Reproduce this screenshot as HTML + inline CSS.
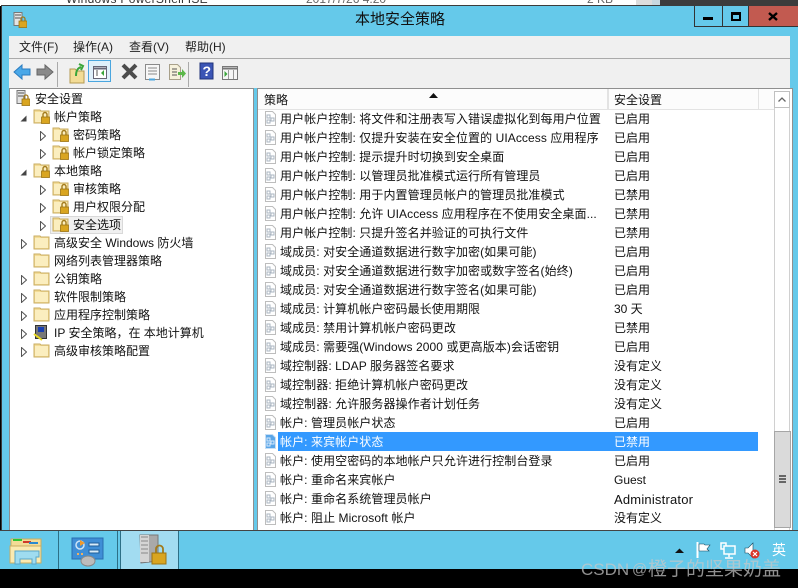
<!DOCTYPE html>
<html><head><meta charset="utf-8"><style>
html,body{margin:0;padding:0;width:798px;height:588px;overflow:hidden;background:#000}
body{position:relative;font:12px/16px "Liberation Sans","Noto Sans CJK SC",sans-serif;color:#111}
div,span,svg{position:absolute}
span{white-space:nowrap}
.r{height:19px;left:0;width:500px}
.r svg{left:6px;top:2px}
.r span{line-height:19px;top:1px;left:22px;letter-spacing:.08px}
.r span+span{left:356px;letter-spacing:0}
.t{height:18px;left:0;width:240px}
.t span{line-height:18px;top:0}
.t svg{top:0}
.m{top:39px;font-size:12px;line-height:16px;color:#222}
</style></head><body>
<svg width="0" height="0" style="left:0;top:0"><defs>
<symbol id="doc" viewBox="0 0 13 15"><path d="M1.5.5h7l3 3v11h-10z" fill="#fff" stroke="#bdbdbd"/><path d="M3 4h3v3H3zM7 7h3v3H7zM3 9h3v3H3z" fill="none" stroke="#aab4c0"/></symbol>
<symbol id="docs" viewBox="0 0 13 15"><path d="M1.5.5h7l3 3v11h-10z" fill="#5aa6e8" stroke="#c6def5"/><path d="M3 4h3v3H3zM7 7h3v3H7zM3 9h3v3H3z" fill="none" stroke="#d7e8fa"/></symbol>
<symbol id="fold" viewBox="0 0 17 16"><path d="M1 3V2h6l1 1h8v12H1z" fill="#f3dc96" stroke="#c9ad62"/><path d="M2 4h13v10H2z" fill="#fbeebf"/></symbol>
<symbol id="flock" viewBox="0 0 17 16"><path d="M1 3V2h6l1 1h8v12H1z" fill="#f3dc96" stroke="#c9ad62"/><path d="M2 4h13v10H2z" fill="#fbeebf"/><path d="M10 9V6.5a2 2 0 0 1 4 0V9" fill="none" stroke="#a27a1c" stroke-width="1.4"/><rect x="8.5" y="9" width="8" height="6.5" fill="#d9a520" stroke="#9c7412" stroke-width=".8"/></symbol>
<symbol id="slock" viewBox="0 0 14 16"><path d="M1 .5h8v13H1z" fill="#e4e4e4" stroke="#777"/><path d="M2 3h6M2 6h6" stroke="#555"/><path d="M8 9V7a2 2 0 0 1 4 0v2" fill="none" stroke="#a27a1c" stroke-width="1.3"/><rect x="6" y="9" width="8" height="6.5" fill="#d9a520" stroke="#9c7412" stroke-width=".8"/></symbol>
<symbol id="ao" viewBox="0 0 6 10"><path d="M.5.5l5 4.5-5 4.5z" fill="#fff" stroke="#555"/></symbol>
<symbol id="ad" viewBox="0 0 7 7"><path d="M6.5.5v6h-6z" fill="#444"/></symbol>
</defs></svg>

<!-- background fragment -->
<div style="left:0;top:0;width:798px;height:6px;background:#fff;overflow:hidden">
<span style="left:66px;top:-9px;font-size:12px;letter-spacing:.3px;color:#333">Windows PowerShell ISE</span>
<span style="left:306px;top:-9px;color:#666">2017/7/26 4:20</span>
<span style="left:587px;top:-9px;color:#666">2 KB</span>
<div style="left:636px;top:0;width:16px;height:6px;background:#ddd"></div>
<div style="left:652px;top:0;width:8px;height:6px;background:#c8d8e0"></div>
<div style="left:660px;top:0;width:138px;height:6px;background:#3c3c3c"></div>
</div>

<!-- window -->
<div style="left:1px;top:5px;width:797px;height:525px;background:#65c9ea;border-top:1px solid #3c3c3c;border-left:1px solid #3c3c3c;box-sizing:border-box"></div>
<svg width="14" height="16" style="left:13px;top:12px"><use href="#slock"/></svg>
<span style="left:0;width:800px;text-align:center;top:12px;font-size:15px;color:#111">本地安全策略</span>
<!-- caption buttons -->
<div style="left:694px;top:6px;width:27px;height:20px;border:1px solid #333;border-top:0;box-sizing:content-box"></div>
<div style="left:722px;top:6px;width:26px;height:20px;border-right:1px solid #333;border-bottom:1px solid #333"></div>
<div style="left:749px;top:6px;width:49px;height:20px;background:#c25a50;border-bottom:1px solid #333"></div>
<div style="left:703px;top:17px;width:10px;height:3px;background:#000"></div>
<div style="left:731px;top:12px;width:6px;height:4px;border:2px solid #000;border-top-width:3px"></div>
<svg width="10" height="9" style="left:768px;top:12px"><path d="M1 1l8 7M9 1L1 8" stroke="#000" stroke-width="2.4"/></svg>

<!-- menu + toolbar -->
<div style="left:9px;top:36px;width:781px;height:22px;background:#f0f0f0"></div>
<div style="left:9px;top:58px;width:781px;height:1px;background:#aaa"></div>
<div style="left:9px;top:59px;width:781px;height:29px;background:#f0f0f0"></div>
<span class="m" style="left:19px">文件(F)</span>
<span class="m" style="left:73px">操作(A)</span>
<span class="m" style="left:129px">查看(V)</span>
<span class="m" style="left:185px">帮助(H)</span>

<svg width="240" height="29" style="left:9px;top:59px">
<path d="M5 13l8-7v4h8v6h-8v4z" fill="#4aa8e8" stroke="#2b7dc0"/>
<path d="M44 13l-8-7v4h-8v6h8v4z" fill="#8a8a8a" stroke="#666"/>
<path d="M48.500 3v25" stroke="#aaa"/>
<path d="M61 10h5l2 2h7v12H61z" fill="#f3dc96" stroke="#b39a52"/>
<path d="M67 17c0-6 2-8 5-9M70 5l4 2-2 4" fill="none" stroke="#3aa53a" stroke-width="2"/>
<rect x="79.500" y="1.500" width="22" height="21" fill="#dff0fb" stroke="#4aa6df"/>
<rect x="84.500" y="7.500" width="13" height="12" fill="#fff" stroke="#667"/>
<path d="M85 9.500h12" stroke="#667" stroke-width="2"/>
<path d="M87 12h2M87 14h2M87 16h2" stroke="#555"/>
<path d="M95 11v6l-3-3z" fill="#3aa53a"/>
<path d="M114 6l13 13M127 6L114 19" stroke="#4c4c4c" stroke-width="4"/>
<rect x="136.500" y="5.500" width="14" height="15" fill="#f7f7f7" stroke="#8a8a8a"/>
<path d="M139 9h9M139 12h9M139 15h9" stroke="#8a8a8a"/>
<path d="M140 20.500h6" stroke="#4aa6df" stroke-width="2"/>
<path d="M160.500 5.500h8l3 3v12h-11z" fill="#f6f1dc" stroke="#a8a08a"/>
<path d="M163 10h5M163 13h5M163 16h5" stroke="#555"/>
<path d="M169 13h4v-3l4 4.500-4 4.500v-3h-4z" fill="#5cb84a"/>
<path d="M179.500 3v25" stroke="#aaa"/>
<rect x="191" y="4" width="13" height="16" fill="#3b55b5" stroke="#22337a"/>
<text x="193.500" y="17" font-family="Liberation Sans" font-size="14" font-weight="bold" fill="#fff">?</text>
<rect x="213.500" y="7.500" width="15" height="13" fill="#f6f6f6" stroke="#777"/>
<path d="M214 9.500h14" stroke="#777" stroke-width="2"/>
<path d="M219.500 11v9M224.500 11v9" stroke="#999"/>
<path d="M215.500 12v6l3-3z" fill="#3aa53a"/>
</svg>

<!-- left pane -->
<div style="left:9px;top:88px;width:245px;height:443px;background:#fff;border:1px solid #8f8f8f;border-bottom:0;box-sizing:border-box;overflow:hidden">
<div class="t" style="top:1px"><svg width="14" height="16" style="left:6px"><use href="#slock"/></svg><span style="left:25px">安全设置</span></div>
<div class="t" style="top:19px"><svg width="7" height="7" style="left:10px;top:7px"><use href="#ad"/></svg><svg width="17" height="16" style="left:23px"><use href="#flock"/></svg><span style="left:44px">帐户策略</span></div>
<div class="t" style="top:37px"><svg width="6" height="10" style="left:30px;top:5px"><use href="#ao"/></svg><svg width="17" height="16" style="left:42px"><use href="#flock"/></svg><span style="left:63px">密码策略</span></div>
<div class="t" style="top:55px"><svg width="6" height="10" style="left:30px;top:5px"><use href="#ao"/></svg><svg width="17" height="16" style="left:42px"><use href="#flock"/></svg><span style="left:63px">帐户锁定策略</span></div>
<div class="t" style="top:73px"><svg width="7" height="7" style="left:10px;top:7px"><use href="#ad"/></svg><svg width="17" height="16" style="left:23px"><use href="#flock"/></svg><span style="left:44px">本地策略</span></div>
<div class="t" style="top:91px"><svg width="6" height="10" style="left:30px;top:5px"><use href="#ao"/></svg><svg width="17" height="16" style="left:42px"><use href="#flock"/></svg><span style="left:63px">审核策略</span></div>
<div class="t" style="top:109px"><svg width="6" height="10" style="left:30px;top:5px"><use href="#ao"/></svg><svg width="17" height="16" style="left:42px"><use href="#flock"/></svg><span style="left:63px">用户权限分配</span></div>
<div style="left:40px;top:127px;width:73px;height:18px;background:#f0f0f0;border:1px solid #d9d9d9;box-sizing:border-box"></div>
<div class="t" style="top:127px"><svg width="6" height="10" style="left:30px;top:5px"><use href="#ao"/></svg><svg width="17" height="16" style="left:42px"><use href="#flock"/></svg><span style="left:63px">安全选项</span></div>
<div class="t" style="top:145px"><svg width="6" height="10" style="left:11px;top:5px"><use href="#ao"/></svg><svg width="17" height="16" style="left:23px"><use href="#fold"/></svg><span style="left:44px">高级安全 Windows 防火墙</span></div>
<div class="t" style="top:163px"><svg width="17" height="16" style="left:23px"><use href="#fold"/></svg><span style="left:44px">网络列表管理器策略</span></div>
<div class="t" style="top:181px"><svg width="6" height="10" style="left:11px;top:5px"><use href="#ao"/></svg><svg width="17" height="16" style="left:23px"><use href="#fold"/></svg><span style="left:44px">公钥策略</span></div>
<div class="t" style="top:199px"><svg width="6" height="10" style="left:11px;top:5px"><use href="#ao"/></svg><svg width="17" height="16" style="left:23px"><use href="#fold"/></svg><span style="left:44px">软件限制策略</span></div>
<div class="t" style="top:217px"><svg width="6" height="10" style="left:11px;top:5px"><use href="#ao"/></svg><svg width="17" height="16" style="left:23px"><use href="#fold"/></svg><span style="left:44px">应用程序控制策略</span></div>
<div class="t" style="top:235px"><svg width="6" height="10" style="left:11px;top:5px"><use href="#ao"/></svg><svg width="16" height="17" style="left:23px"><rect x="2.500" y="1.500" width="11" height="13" fill="#777" stroke="#333"/><rect x="5" y="3" width="6" height="5" fill="#1a3fb0"/><path d="M1 10l8 6" stroke="#e8d820" stroke-width="2"/></svg><span style="left:44px">IP 安全策略，在 本地计算机</span></div>
<div class="t" style="top:253px"><svg width="6" height="10" style="left:11px;top:5px"><use href="#ao"/></svg><svg width="17" height="16" style="left:23px"><use href="#fold"/></svg><span style="left:44px">高级审核策略配置</span></div>
</div>

<!-- right pane -->
<div style="left:257px;top:88px;width:536px;height:443px;background:#fff;border:1px solid #8f8f8f;border-bottom:0;box-sizing:border-box;overflow:hidden" >
<div style="left:0;top:0;width:517px;height:20px;background:#fcfcfc;border-bottom:1px solid #e3e3e3"></div>
<div style="left:349px;top:0;width:2px;height:20px;background:#e3e3e3"></div>
<div style="left:500px;top:0;width:1px;height:20px;background:#e3e3e3"></div>
<span style="left:6px;top:3px">策略</span>
<span style="left:356px;top:3px">安全设置</span>
<svg width="9" height="5" style="left:171px;top:4px"><path d="M0 5l4.500-5L9 5z" fill="#111"/></svg>
<div style="left:0;top:20px;width:516px">
<div style="left:20px;top:323px;width:480px;height:19px;background:#3399ff"></div>
</div>
<div style="left:0;top:20px;width:516px">
<div class="r" style="top:0"><svg width="13" height="15"><use href="#doc"/></svg><span>用户帐户控制: 将文件和注册表写入错误虚拟化到每用户位置</span><span>已启用</span></div>
<div class="r" style="top:19px"><svg width="13" height="15"><use href="#doc"/></svg><span>用户帐户控制: 仅提升安装在安全位置的 UIAccess 应用程序</span><span>已启用</span></div>
<div class="r" style="top:38px"><svg width="13" height="15"><use href="#doc"/></svg><span>用户帐户控制: 提示提升时切换到安全桌面</span><span>已启用</span></div>
<div class="r" style="top:57px"><svg width="13" height="15"><use href="#doc"/></svg><span>用户帐户控制: 以管理员批准模式运行所有管理员</span><span>已启用</span></div>
<div class="r" style="top:76px"><svg width="13" height="15"><use href="#doc"/></svg><span>用户帐户控制: 用于内置管理员帐户的管理员批准模式</span><span>已禁用</span></div>
<div class="r" style="top:95px"><svg width="13" height="15"><use href="#doc"/></svg><span>用户帐户控制: 允许 UIAccess 应用程序在不使用安全桌面...</span><span>已禁用</span></div>
<div class="r" style="top:114px"><svg width="13" height="15"><use href="#doc"/></svg><span>用户帐户控制: 只提升签名并验证的可执行文件</span><span>已禁用</span></div>
<div class="r" style="top:133px"><svg width="13" height="15"><use href="#doc"/></svg><span>域成员: 对安全通道数据进行数字加密(如果可能)</span><span>已启用</span></div>
<div class="r" style="top:152px"><svg width="13" height="15"><use href="#doc"/></svg><span>域成员: 对安全通道数据进行数字加密或数字签名(始终)</span><span>已启用</span></div>
<div class="r" style="top:171px"><svg width="13" height="15"><use href="#doc"/></svg><span>域成员: 对安全通道数据进行数字签名(如果可能)</span><span>已启用</span></div>
<div class="r" style="top:190px"><svg width="13" height="15"><use href="#doc"/></svg><span>域成员: 计算机帐户密码最长使用期限</span><span>30 天</span></div>
<div class="r" style="top:209px"><svg width="13" height="15"><use href="#doc"/></svg><span>域成员: 禁用计算机帐户密码更改</span><span>已禁用</span></div>
<div class="r" style="top:228px"><svg width="13" height="15"><use href="#doc"/></svg><span>域成员: 需要强(Windows 2000 或更高版本)会话密钥</span><span>已启用</span></div>
<div class="r" style="top:247px"><svg width="13" height="15"><use href="#doc"/></svg><span>域控制器: LDAP 服务器签名要求</span><span>没有定义</span></div>
<div class="r" style="top:266px"><svg width="13" height="15"><use href="#doc"/></svg><span>域控制器: 拒绝计算机帐户密码更改</span><span>没有定义</span></div>
<div class="r" style="top:285px"><svg width="13" height="15"><use href="#doc"/></svg><span>域控制器: 允许服务器操作者计划任务</span><span>没有定义</span></div>
<div class="r" style="top:304px"><svg width="13" height="15"><use href="#doc"/></svg><span>帐户: 管理员帐户状态</span><span>已启用</span></div>
<div class="r" style="top:323px;color:#fff"><svg width="13" height="15"><use href="#docs"/></svg><span>帐户: 来宾帐户状态</span><span>已禁用</span></div>
<div class="r" style="top:342px"><svg width="13" height="15"><use href="#doc"/></svg><span>帐户: 使用空密码的本地帐户只允许进行控制台登录</span><span>已启用</span></div>
<div class="r" style="top:361px"><svg width="13" height="15"><use href="#doc"/></svg><span>帐户: 重命名来宾帐户</span><span>Guest</span></div>
<div class="r" style="top:380px"><svg width="13" height="15"><use href="#doc"/></svg><span>帐户: 重命名系统管理员帐户</span><span style="font-size:13px;letter-spacing:.2px">Administrator</span></div>
<div class="r" style="top:399px"><svg width="13" height="15"><use href="#doc"/></svg><span>帐户: 阻止 Microsoft 帐户</span><span>没有定义</span></div>
</div>
<!-- scrollbar -->
<div style="left:516px;top:2px;width:16px;height:441px;background:#fff;border:1px solid #d0d0d0;box-sizing:border-box"></div>
<div style="left:516px;top:2px;width:16px;height:17px;background:#fff;border:1px solid #c0c0c0;box-sizing:border-box"></div>
<svg width="8" height="5" style="left:520px;top:8px"><path d="M.5 4.500L4 1l3.500 3.500" fill="none" stroke="#666" stroke-width="1.300"/></svg>
<div style="left:516px;top:342px;width:17px;height:97px;background:#dadada;border:1px solid #a6a6a6;box-sizing:border-box"></div>
<div style="left:521px;top:386px;width:7px;height:2px;background:#666"></div>
<div style="left:521px;top:389px;width:7px;height:2px;background:#666"></div>
<div style="left:521px;top:392px;width:7px;height:2px;background:#666"></div>
</div>

<!-- taskbar -->
<div style="left:0;top:530px;width:798px;height:39px;background:#65c9ea;border-top:1px solid #444;box-sizing:border-box"></div>
<div style="left:58px;top:531px;width:1px;height:38px;background:#2d6f86"></div>
<div style="left:117px;top:531px;width:1px;height:38px;background:#2d6f86"></div>
<div style="left:120px;top:531px;width:59px;height:38px;background:#a2dcf1;border-left:1px solid #2d6f86;border-right:1px solid #2d6f86;box-sizing:border-box"></div>
<svg width="34" height="30" style="left:9px;top:537px"><path d="M2 9V2h30v7z" fill="#f3dc96" stroke="#c9ad62"/><path d="M4 2h9v2H4z" fill="#2fc62f"/><path d="M14 4h8v2h-8z" fill="#d03a2a"/><path d="M20 5h9v2h-9z" fill="#2a8ad0"/><path d="M1 9h31v17H1z" fill="#fbeab0" stroke="#c9ad62"/><path d="M6 14h24v6h-3v7h-4v-5H11v5H6z" fill="#9fdcf0" stroke="#5aa6c8"/></svg>
<svg width="34" height="30" style="left:71px;top:537px"><rect x="1" y="1" width="31" height="21" fill="#3f8ed6" stroke="#296eb0"/><circle cx="9" cy="8" r="4" fill="none" stroke="#cde4f6" stroke-width="1.500"/><path d="M9 3l5 3-5 3z" fill="#f09a2c"/><path d="M18 6h10v3H18zM18 13h10v3H18z" fill="#d8ecfa" stroke="#1f5e9a"/><path d="M6 17h2M10 17h2" stroke="#f0b060" stroke-width="2"/><ellipse cx="17" cy="24" rx="7" ry="5" fill="#bcbcbc" stroke="#888"/></svg>
<svg width="30" height="34" style="left:138px;top:533px"><path d="M2 2h18v26l-17 2z" fill="#a9a9a9" stroke="#777"/><path d="M2 2h9v27H2z" fill="#d4d4d4"/><path d="M3 4h7M3 8h7M3 12h7M3 16h7M3 20h7" stroke="#888"/><path d="M18 20v-4a3.500 3.500 0 0 1 7 0v4" fill="none" stroke="#a27a1c" stroke-width="1.800"/><rect x="14" y="20" width="14" height="11" fill="#d9a520" stroke="#9c7412"/></svg>
<svg width="9" height="5" style="left:675px;top:548px"><path d="M0 5l4.500-4.500L9 5z" fill="#111"/></svg>
<svg width="16" height="17" style="left:696px;top:542px"><path d="M1.500 0v16" stroke="#fff" stroke-width="2"/><path d="M3 2h5l1 1h5l-3 4 2 2H3z" fill="#fff" stroke="#17475c" stroke-width=".6"/></svg>
<svg width="16" height="17" style="left:720px;top:542px"><rect x="1" y="1" width="5" height="6" fill="none" stroke="#fff" stroke-width="1.500"/><rect x="4" y="4" width="11" height="8" fill="#65c9ea" stroke="#fff" stroke-width="1.500"/><path d="M9 12v3M5 16h8" stroke="#fff" stroke-width="1.500"/></svg>
<svg width="16" height="17" style="left:744px;top:542px"><path d="M1 6h3l5-5v15l-5-5H1z" fill="#fff" stroke="#17475c" stroke-width=".6"/><circle cx="11" cy="12" r="4.500" fill="#d8362a"/><path d="M9 10l4 4M13 10l-4 4" stroke="#fff" stroke-width="1.200"/></svg>
<span style="left:772px;top:542px;color:#fff;font-size:14px">英</span>

<!-- watermark -->
<span style="left:581px;top:558px;font-size:17px;line-height:24px;color:rgba(200,200,200,.72)">CSDN</span>
<span style="left:632px;top:558px;font-size:15px;line-height:24px;color:rgba(200,200,200,.72)">@</span>
<span style="left:648px;top:558px;font-size:19px;line-height:24px;color:rgba(200,200,200,.72)">橙子的坚果奶盖</span>
</body></html>
